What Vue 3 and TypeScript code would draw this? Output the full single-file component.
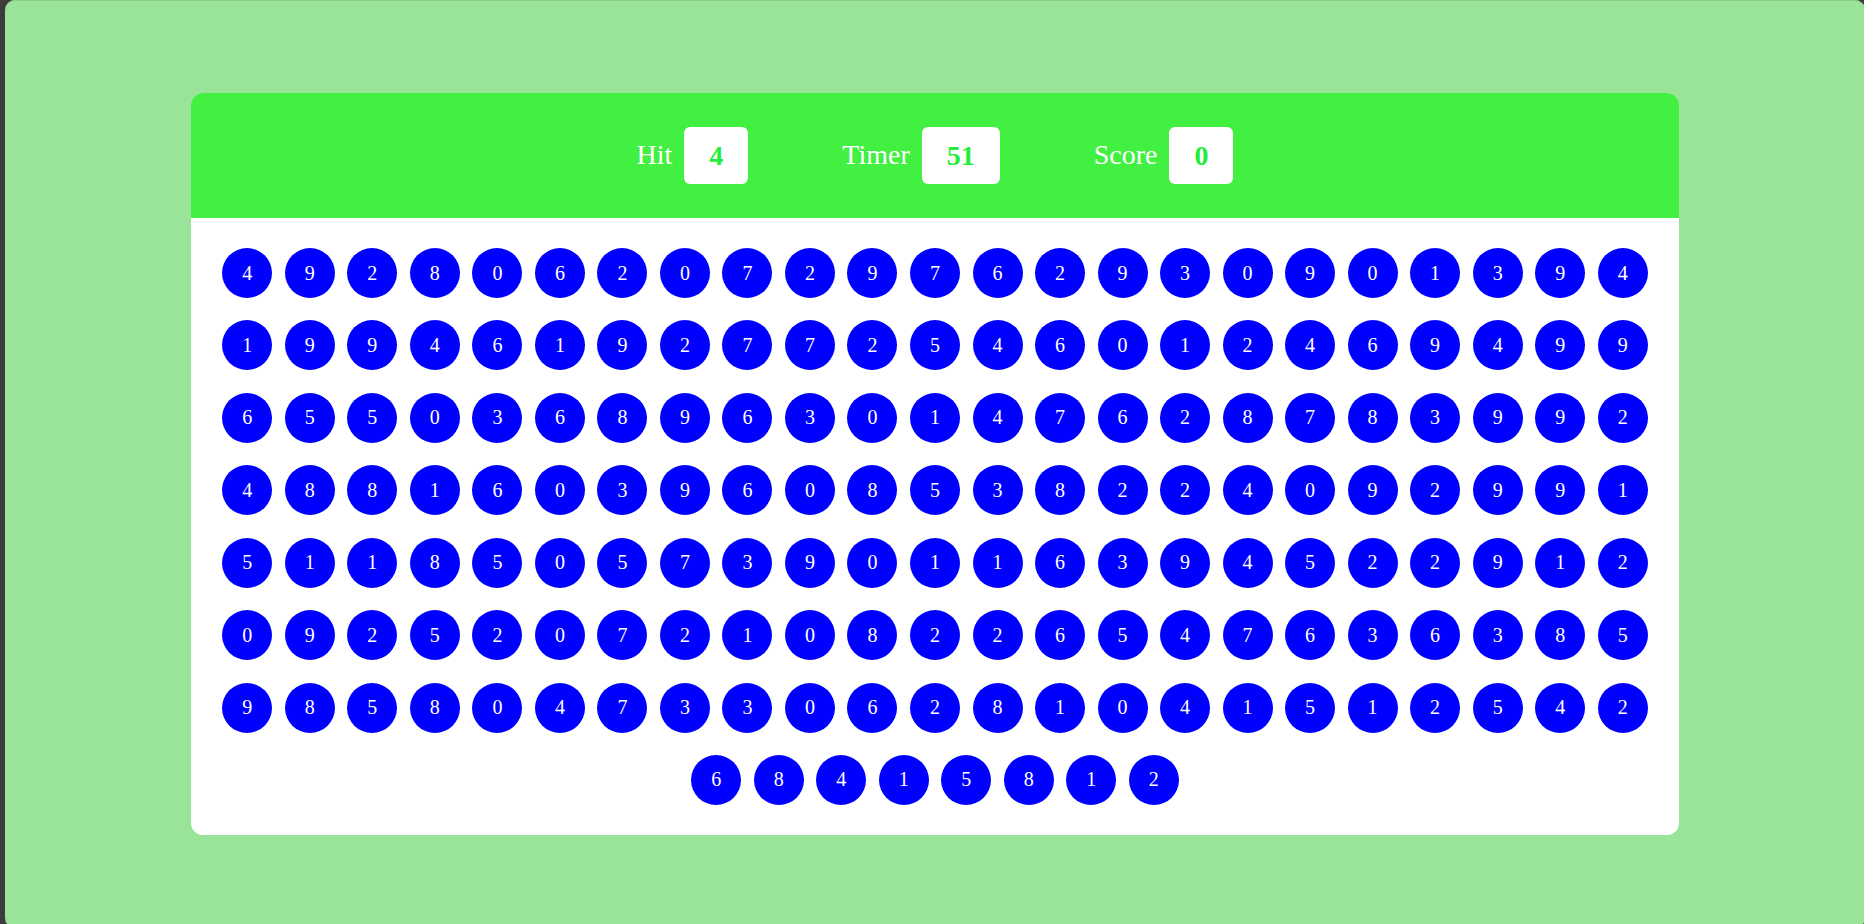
<script setup lang="ts">
import { ref } from 'vue'

const hit = ref<number>(4)
const timer = ref<number>(51)
const score = ref<number>(0)

const rows: string[] = [
  '49280620729762930901394',
  '19946192772546012469499',
  '65503689630147628783992',
  '48816039608538224092991',
  '51185057390116394522912',
  '09252072108226547636385',
  '98580473306281041512542',
  '68415812',
]
const bubbles = ref<number[]>(rows.join('').split('').map(Number))

function randomDigit(): number {
  return Math.floor(Math.random() * 10)
}

function pop(value: number): void {
  if (value !== hit.value) return
  score.value += 10
  hit.value = randomDigit()
  bubbles.value = bubbles.value.map(randomDigit)
}
</script>

<template>
  <main class="page">
    <section class="panel">
      <header class="top">
        <div class="item">
          <span id="hit-label">Hit</span>
          <output class="box" aria-labelledby="hit-label">{{ hit }}</output>
        </div>
        <div class="item">
          <span id="timer-label">Timer</span>
          <output class="box" aria-labelledby="timer-label">{{ timer }}</output>
        </div>
        <div class="item">
          <span id="score-label">Score</span>
          <output class="box" aria-labelledby="score-label">{{ score }}</output>
        </div>
      </header>
      <div class="bubbles">
        <div v-for="(n, i) in bubbles" :key="i" class="cell">
          <button type="button" class="bubble" @click="pop(n)">{{ n }}</button>
        </div>
      </div>
    </section>
  </main>
</template>

<style>
body {
  margin: 0;
  background: #3c3c3c;
  overflow: hidden;
}
</style>

<style scoped>
.page {
  box-sizing: border-box;
  display: flex;
  align-items: center;
  justify-content: center;
  height: calc(100vh + 4px);
  margin-left: 5px;
  margin-right: -1px;
  border-radius: 10px;
  background: #99e499;
  box-shadow: inset 0 1px 0 #8bcb8b;
  font-family: "Liberation Serif", "Times New Roman", serif;
}

.panel {
  display: flex;
  flex-direction: column;
  width: 80%;
  height: 80%;
  border-radius: 12px;
  background: #fff;
  overflow: hidden;
}

.top {
  display: flex;
  align-items: center;
  justify-content: center;
  gap: 94px;
  flex: none;
  height: 125px;
  background: #42f042;
  color: #fff;
  font-size: 28px;
}

.item {
  display: flex;
  align-items: center;
  gap: 12px;
}

.box {
  padding: 12px 25px;
  border-radius: 6px;
  background: #fff;
  color: #23ed3b;
  font-weight: 700;
  line-height: 33px;
}

.bubbles {
  display: flex;
  flex: 1;
  flex-wrap: wrap;
  align-items: center;
  justify-content: center;
  padding: 19px 25px;
}

.cell {
  display: flex;
  justify-content: center;
  width: calc(100% / 23);
}

.bubble {
  flex: none;
  width: 50px;
  height: 50px;
  padding: 0;
  border: 0;
  border-radius: 50%;
  background: #00f;
  color: #fff;
  font: inherit;
  font-size: 20px;
  cursor: pointer;
}

.bubble:hover {
  background: #4169e1;
}
</style>
